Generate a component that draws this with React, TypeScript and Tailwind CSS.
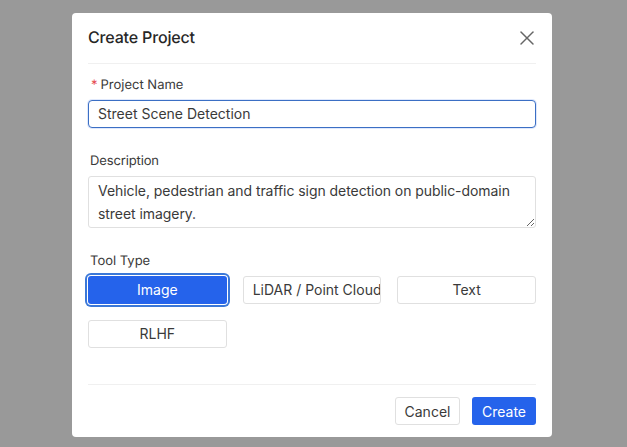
import React from "react";
import { X } from "lucide-react";

export default function App() {
  return (
    <div className="h-[447px] w-[627px] overflow-hidden bg-[#999999] pl-[72px] pt-[13px] font-['Inter',sans-serif] text-[14px] text-[#262626] [text-rendering:geometricPrecision]">
      <div className="flex h-[424px] w-[480px] flex-col rounded bg-white px-4">
        <div className="flex h-[51px] shrink-0 items-center justify-between border-b border-[#f0f0f0]">
          <h2 className="pb-[2px] text-[16px] font-medium leading-6 tracking-[-0.01em] text-[#262626]">Create Project</h2>
          <X className="-mr-[3px] h-6 w-6 text-[#666666]" strokeWidth={1.5} />
        </div>

        <div className="flex flex-1 flex-col">
          <label className="mt-[12px] flex h-[16px] items-center pl-[3px] pt-[2px] text-[13px] leading-4 text-[#3a3a3a]">
            <span className="mr-[3px] text-[#e5484d]">*</span>Project Name
          </label>
          <input
            readOnly
            value="Street Scene Detection"
            className="mt-2 h-[28px] w-full rounded border border-[#3b6fc4] bg-white px-[9px] pb-[2px] text-[14px] text-[#3a3a3a] shadow-[0_0_0_1px_rgba(37,99,235,0.15)] outline-none"
          />

          <label className="mt-6 flex h-[16px] items-center pl-[2px] pt-[2px] text-[13px] leading-4 tracking-[-0.01em] text-[#3a3a3a]">Description</label>
          <textarea
            readOnly
            value="Vehicle, pedestrian and traffic sign detection on public-domain street imagery."
            className="mt-2 h-[52px] w-full rounded-[3px] border border-[#e0e0e0] bg-white px-[9px] pt-[2px] text-[14px] leading-[23px] tracking-[-0.06px] text-[#3a3a3a] outline-none"
          />

          <label className="mt-6 flex h-[16px] items-center pl-[2px] pt-[2px] text-[13px] leading-4 text-[#3a3a3a]">Tool Type</label>
          <div className="mt-2 grid grid-cols-3 gap-x-4 gap-y-4">
            <button className="h-[28px] rounded-[3px] bg-[#2563eb] pb-[2px] text-white shadow-[0_0_0_1px_#fff,0_0_0_3px_#3b78d8]">Image</button>
            <button className="h-[28px] overflow-hidden whitespace-nowrap rounded-[3px] border border-[#e0e0e0] bg-white pb-[2px] pl-[9px] text-left text-[#3a3a3a]">LiDAR / Point Cloud</button>
            <button className="h-[28px] rounded-[3px] border border-[#e0e0e0] bg-white pb-[2px] text-[#3a3a3a]">Text</button>
            <button className="h-[28px] rounded-[3px] border border-[#e0e0e0] bg-white pb-[2px] text-[#3a3a3a]">RLHF</button>
          </div>
        </div>

        <div className="flex h-[53px] shrink-0 items-start justify-end gap-3 border-t border-[#f0f0f0] pt-3">
          <button className="h-[28px] w-[65px] rounded-[3px] border border-[#e0e0e0] bg-white text-[#3a3a3a]">Cancel</button>
          <button className="h-[28px] w-[64px] rounded-[3px] bg-[#2563eb] text-white">Create</button>
        </div>
      </div>
    </div>
  );
}
